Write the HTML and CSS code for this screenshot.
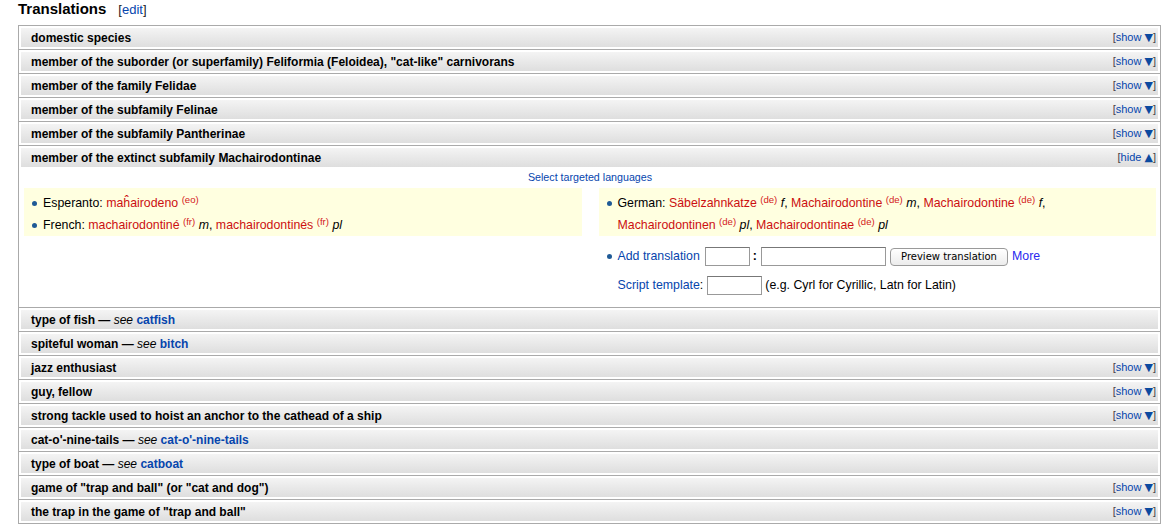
FILE: index.html
```html
<!DOCTYPE html>
<html>
<head>
<meta charset="utf-8">
<link rel="stylesheet" href="styles.css">
</head>
<body>
<div class="section">
  <h2 class="title"><span class="headline">Translations</span><span class="editsection">[<a href="#">edit</a>]</span></h2>
  <div class="frames">
    <div class="frame"><div class="head"><span class="label">domestic species</span><span class="toggle">[<a href="#">show <b>▼</b></a>]</span></div></div>
    <div class="frame"><div class="head"><span class="label">member of the suborder (or superfamily) Feliformia (Feloidea), "cat-like" carnivorans</span><span class="toggle">[<a href="#">show <b>▼</b></a>]</span></div></div>
    <div class="frame"><div class="head"><span class="label">member of the family Felidae</span><span class="toggle">[<a href="#">show <b>▼</b></a>]</span></div></div>
    <div class="frame"><div class="head"><span class="label">member of the subfamily Felinae</span><span class="toggle">[<a href="#">show <b>▼</b></a>]</span></div></div>
    <div class="frame"><div class="head"><span class="label">member of the subfamily Pantherinae</span><span class="toggle">[<a href="#">show <b>▼</b></a>]</span></div></div>
    <div class="frame">
      <div class="head"><span class="label">member of the extinct subfamily Machairodontinae</span><span class="toggle">[<a href="#">hide <b>▲</b></a>]</span></div>
      <div class="content">
        <div class="select"><a href="#">Select targeted languages</a></div>
        <div class="cols">
          <div class="cell">
            <ul>
              <li>Esperanto: <span class="term"><a class="new" href="#">maĥairodeno</a> <sup class="tpos">(eo)</sup></span></li>
              <li>French: <span class="term"><a class="new" href="#">machairodontiné</a> <sup class="tpos">(fr)</sup> <i>m</i>,</span> <span class="term"><a class="new" href="#">machairodontinés</a> <sup class="tpos">(fr)</sup> <i>pl</i></span></li>
            </ul>
          </div>
          <div class="cell">
            <ul>
              <li>German: <span class="term"><a class="new" href="#">Säbelzahnkatze</a> <sup class="tpos">(de)</sup> <i>f</i>,</span> <span class="term"><a class="new" href="#">Machairodontine</a> <sup class="tpos">(de)</sup> <i>m</i>,</span> <span class="term"><a class="new" href="#">Machairodontine</a> <sup class="tpos">(de)</sup> <i>f</i>,</span> <span class="term"><a class="new" href="#">Machairodontinen</a> <sup class="tpos">(de)</sup> <i>pl</i>,</span> <span class="term"><a class="new" href="#">Machairodontinae</a> <sup class="tpos">(de)</sup> <i>pl</i></span></li>
            </ul>
          </div>
          <div class="form">
            <div class="formline bulleted"><a href="#">Add translation</a><input class="in-lang" type="text"><b class="colon">:</b><input class="in-word" type="text"><button class="preview" type="button">Preview translation</button><a class="more" href="#">More</a></div>
            <div class="formline"><a href="#">Script template</a>:<input class="in-script" type="text"><span class="hint">(e.g. Cyrl for Cyrillic, Latn for Latin)</span></div>
          </div>
        </div>
      </div>
    </div>
    <div class="frame"><div class="head"><span class="label">type of fish <span class="see">— <i>see</i> <a href="#">catfish</a></span></span></div></div>
    <div class="frame"><div class="head"><span class="label">spiteful woman <span class="see">— <i>see</i> <a href="#">bitch</a></span></span></div></div>
    <div class="frame"><div class="head"><span class="label">jazz enthusiast</span><span class="toggle">[<a href="#">show <b>▼</b></a>]</span></div></div>
    <div class="frame"><div class="head"><span class="label">guy, fellow</span><span class="toggle">[<a href="#">show <b>▼</b></a>]</span></div></div>
    <div class="frame"><div class="head"><span class="label">strong tackle used to hoist an anchor to the cathead of a ship</span><span class="toggle">[<a href="#">show <b>▼</b></a>]</span></div></div>
    <div class="frame"><div class="head"><span class="label">cat-o'-nine-tails <span class="see">— <i>see</i> <a href="#">cat-o'-nine-tails</a></span></span></div></div>
    <div class="frame"><div class="head"><span class="label">type of boat <span class="see">— <i>see</i> <a href="#">catboat</a></span></span></div></div>
    <div class="frame"><div class="head"><span class="label">game of "trap and ball" (or "cat and dog")</span><span class="toggle">[<a href="#">show <b>▼</b></a>]</span></div></div>
    <div class="frame"><div class="head"><span class="label">the trap in the game of "trap and ball"</span><span class="toggle">[<a href="#">show <b>▼</b></a>]</span></div></div>
  </div>
</div>
</body>
</html>
```

FILE: styles.css
```css
html, body {
  margin: 0;
  padding: 0;
  background: #fff;
}
body {
  font-family: "Liberation Sans", Arial, sans-serif;
  color: #000;
}
a {
  color: #0645ad;
  text-decoration: none;
}
.section {
  padding: 0 7px 0 18px;
}
.title {
  margin: 0 0 7px 0;
  height: 18px;
  line-height: 18px;
  font-size: 15px;
  font-weight: bold;
}
.editsection {
  font-weight: normal;
  font-size: 13px;
  margin-left: 12px;
  color: #222;
}
.frame {
  border: 1px solid #aaa;
  padding: 2px;
  margin-top: -1px;
}
.frame:first-child {
  margin-top: 0;
}
.head {
  display: flex;
  justify-content: space-between;
  align-items: center;
  height: 19px;
  padding: 0 2px 0 10px;
  background: linear-gradient(to bottom, #f4f4f4, #dedede);
  font-size: 12px;
  font-weight: bold;
}
.see {
  font-weight: bold;
}
.see i {
  font-weight: normal;
}
.toggle {
  font-weight: normal;
  font-size: 11px;
  color: #444;
}
.toggle b {
  font-family: "DejaVu Sans", sans-serif;
  font-size: 11px;
  font-weight: normal;
  color: #0b4aa0;
}
.content {
  padding: 3px 2px 0 3px;
}
.select {
  text-align: center;
  font-size: 10.7px;
  line-height: 14px;
  margin-bottom: 4px;
}
.cols {
  display: grid;
  grid-template-columns: 1fr 1fr;
  column-gap: 17px;
}
.cell {
  background: #ffffe0;
  padding-top: 4px;
}
.cell ul {
  margin: 0;
  padding: 0;
  list-style: none;
}
.cell li, .bulleted {
  position: relative;
  padding-left: 19px;
  line-height: 22px;
  font-size: 12.35px;
}
.cell li::before, .bulleted::before {
  content: "";
  position: absolute;
  left: 8px;
  top: 9px;
  width: 5px;
  height: 5px;
  border-radius: 50%;
  background: #1f5a96;
}
.term {
  white-space: nowrap;
}
.new {
  color: #cc1010;
}
.tpos {
  font-size: 9.6px;
  color: #d42020;
  vertical-align: 4px;
  line-height: 0;
}
.form {
  grid-column: 2;
  padding: 8px 0 8px;
  font-size: 12.35px;
}
.formline {
  height: 24px;
  line-height: 24px;
  padding-left: 19px;
  white-space: nowrap;
}
.formline + .formline {
  margin-top: 5px;
}
.bulleted::before {
  top: 10px;
}
input {
  box-sizing: border-box;
  height: 19px;
  border: 1px solid #999;
  border-top-color: #777;
  background: #fff;
  padding: 0 2px;
  margin: 0;
  vertical-align: middle;
}
.in-lang {
  width: 45px;
  margin-left: 5px;
}
.colon {
  margin: 0 4px 0 3px;
}
.in-word {
  width: 125px;
}
.preview {
  box-sizing: border-box;
  height: 18px;
  width: 118px;
  margin-left: 4px;
  padding: 0;
  vertical-align: middle;
  border: 1px solid #9a9a9a;
  border-radius: 4px;
  background: linear-gradient(to bottom, #ffffff, #ececec);
  font-family: "DejaVu Sans", sans-serif;
  font-size: 10px;
  color: #000;
}
.more {
  margin-left: 4px;
  color: #2a2aee;
}
.in-script {
  width: 55px;
  margin-left: 4px;
}
.hint {
  margin-left: 3px;
}
```
